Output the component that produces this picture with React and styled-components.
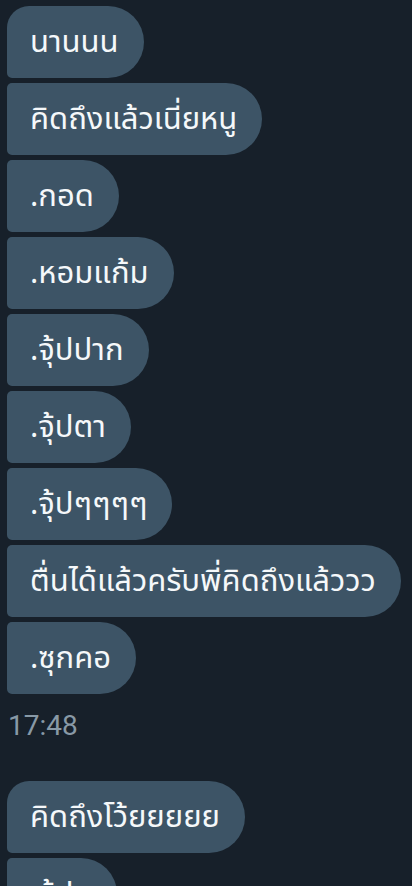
import React from "react";
import styled, { createGlobalStyle } from "styled-components";

const GlobalStyle = createGlobalStyle`
  html, body {
    margin: 0;
    padding: 0;
    background: #17202a;
  }
  body {
    font-family: "Noto Sans Thai", "Noto Sans", Roboto, sans-serif;
  }
`;

const groups = [
  {
    messages: [
      "นานนน",
      "คิดถึงแล้วเนี่ยหนู",
      ".กอด",
      ".หอมแก้ม",
      ".จุ้ปปาก",
      ".จุ้ปตา",
      ".จุ้ปๆๆๆๆ",
      "ตื่นได้แล้วครับพี่คิดถึงแล้ววว",
      ".ซุกคอ",
    ],
    time: "17:48",
  },
  {
    messages: ["คิดถึงโว้ยยยยย", ".จุ้ปๆ"],
  },
];

export default function App() {
  return (
    <>
      <GlobalStyle />
      <Thread>
        {groups.map((group, gi) => (
          <Group key={gi}>
            {group.messages.map((text, i) => (
              <Bubble key={i} $first={i === 0}>
                {text}
              </Bubble>
            ))}
            {group.time && <Time>{group.time}</Time>}
          </Group>
        ))}
      </Thread>
    </>
  );
}

const Thread = styled.div`
  height: 886px;
  overflow: hidden;
  padding: 6px 0 0 7px;
  box-sizing: border-box;
  display: flex;
  flex-direction: column;
  gap: 38px;
`;

const Group = styled.div`
  display: flex;
  flex-direction: column;
  align-items: flex-start;
  gap: 5px;
`;

const Bubble = styled.div`
  box-sizing: border-box;
  height: 72px;
  display: flex;
  align-items: center;
  padding: 0 25px 0 23px;
  background: #3d5466;
  color: #f5f8fa;
  font-size: 31px;
  white-space: nowrap;
  border-radius: ${(p) => (p.$first ? "22px" : "5px")} 36px 36px 5px;
`;

const Time = styled.div`
  margin: 10px 0 0 1px;
  color: #8899a6;
  font-family: Roboto, "Noto Sans", sans-serif;
  font-size: 28px;
  line-height: 34px;
`;
